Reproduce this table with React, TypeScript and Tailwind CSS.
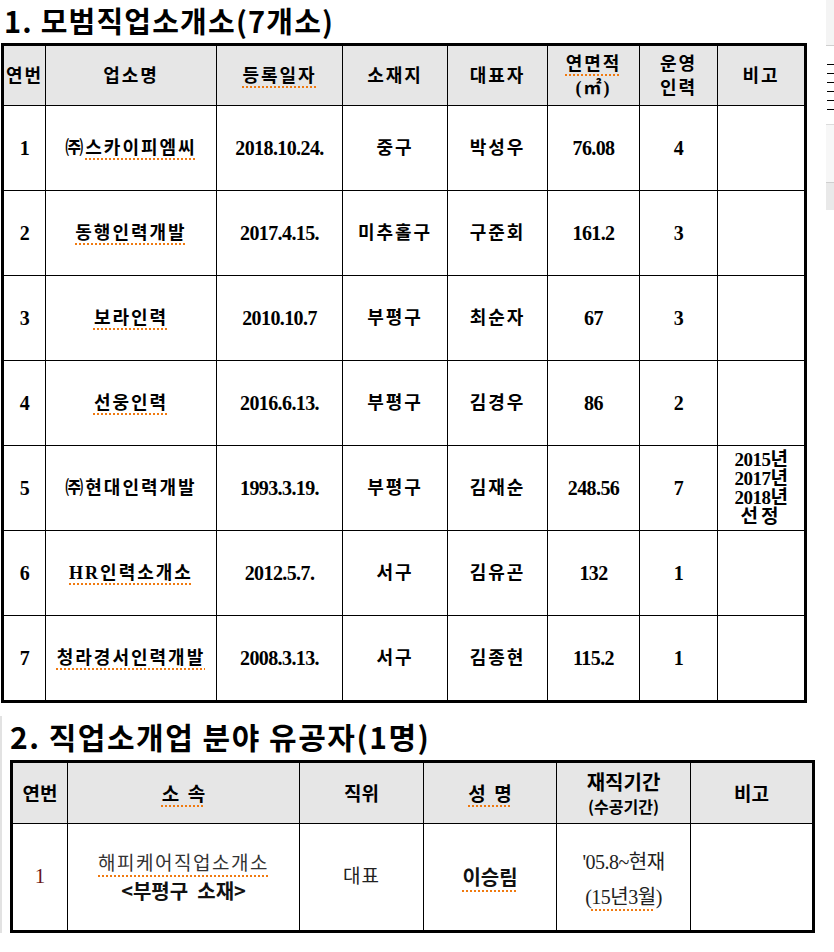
import React from "react";

const serif = "font-['Liberation_Serif','Noto_Sans_CJK_KR',serif]";
const sans = "font-['Noto_Sans_CJK_KR','Noto_Sans',sans-serif]";
const sq = "underline decoration-dotted decoration-[#f07a10] decoration-[1.5px] underline-offset-[5px]";

type Row = {
  n: string;
  name: React.ReactNode;
  date: string;
  loc: string;
  rep: string;
  area: string;
  staff: string;
  note?: React.ReactNode;
};

const rows: Row[] = [
  { n: "1", name: <><span>㈜</span><span className={sq}>스카이피엠씨</span></>, date: "2018.10.24.", loc: "중구", rep: "박성우", area: "76.08", staff: "4" },
  { n: "2", name: <span className={sq}>동행인력개발</span>, date: "2017.4.15.", loc: "미추홀구", rep: "구준회", area: "161.2", staff: "3" },
  { n: "3", name: <span className={sq}>보라인력</span>, date: "2010.10.7", loc: "부평구", rep: "최순자", area: "67", staff: "3" },
  { n: "4", name: <span className={sq}>선웅인력</span>, date: "2016.6.13.", loc: "부평구", rep: "김경우", area: "86", staff: "2" },
  {
    n: "5",
    name: <span>㈜현대인력개발</span>,
    date: "1993.3.19.",
    loc: "부평구",
    rep: "김재순",
    area: "248.56",
    staff: "7",
    note: (
      <div className="flex flex-col items-center leading-[19px] text-[19px] tracking-[-0.5px]">
        <span>2015년</span>
        <span>2017년</span>
        <span>2018년</span>
        <span className="tracking-[3px]">선정</span>
      </div>
    ),
  },
  { n: "6", name: <span className={sq}>HR인력소개소</span>, date: "2012.5.7.", loc: "서구", rep: "김유곤", area: "132", staff: "1" },
  { n: "7", name: <span className={sq}>청라경서인력개발</span>, date: "2008.3.13.", loc: "서구", rep: "김종현", area: "115.2", staff: "1" },
];

function H({ children }: { children: React.ReactNode }) {
  return (
    <div className="bg-[#e6e6e6] flex flex-col items-center justify-center text-center text-[18px] font-bold leading-[24px] tracking-[2px] text-black">
      {children}
    </div>
  );
}

function C({ children, num }: { children?: React.ReactNode; num?: boolean }) {
  return (
    <div
      className={
        num
          ? "bg-white flex items-center justify-center text-center text-[20px] font-bold tracking-[-0.6px] text-black"
          : "bg-white flex items-center justify-center text-center text-[18px] font-bold tracking-[2px] text-black"
      }
    >
      {children}
    </div>
  );
}

function H2({ children }: { children: React.ReactNode }) {
  return (
    <div className={`bg-[#e6e6e6] flex flex-col items-center justify-center text-center text-[19px] font-bold text-black ${sans}`}>
      {children}
    </div>
  );
}

export default function App() {
  return (
    <div className={`w-[834px] h-[952px] bg-white overflow-hidden flex ${serif}`}>
      <div className="w-[826px] flex flex-col">
        {/* Section 1 title */}
        <div className={`h-[43px] pl-[4px] pt-[0px] text-[29px] leading-[40px] font-bold tracking-[1.2px] text-black ${sans}`}>
          1. 모범직업소개소(7개소)
        </div>

        {/* Table 1 */}
        <div className="ml-[1px] w-fit border-[3px] border-black bg-black grid grid-cols-[41px_170px_125px_104px_99px_91px_77px_86px] grid-rows-[59px_repeat(7,84px)] gap-px">
          <H>연번</H>
          <H>업소명</H>
          <H>
            <span className={sq}>등록일자</span>
          </H>
          <H>소재지</H>
          <H>대표자</H>
          <H>
            <span className={sq}>연면적</span>
            <span>(㎡)</span>
          </H>
          <H>
            <span>운영</span>
            <span>인력</span>
          </H>
          <H>비고</H>
          {rows.map((r) => (
            <React.Fragment key={r.n}>
              <C num>{r.n}</C>
              <C>{r.name}</C>
              <C num>{r.date}</C>
              <C>{r.loc}</C>
              <C>{r.rep}</C>
              <C num>{r.area}</C>
              <C num>{r.staff}</C>
              <div className="bg-white flex items-center justify-center text-center font-bold text-black">{r.note}</div>
            </React.Fragment>
          ))}
        </div>

        {/* Section 2 */}
        <div className="mt-[13px] ml-0 border-l-[2px] border-[#e2e2e2] h-[217px] flex flex-col">
          <div className={`h-[48px] pl-[8px] text-[30px] leading-[40px] font-bold tracking-[1.5px] text-black ${sans}`}>
            2. 직업소개업 분야 유공자(1명)
          </div>
          <div className="ml-[8px] w-fit border-[3px] border-black bg-black grid grid-cols-[54px_231px_123px_132px_133px_121px] grid-rows-[60px_106px] gap-px">
            <H2>연번</H2>
            <H2>
              <span className={`${sq} whitespace-pre`}>소  속</span>
            </H2>
            <H2>직위</H2>
            <H2>
              <span className={`${sq} whitespace-pre`}>성  명</span>
            </H2>
            <H2>
              <span className="leading-[26px] text-[20px]">재직기간</span>
              <span className="text-[16px] leading-[22px]">(수공기간)</span>
            </H2>
            <H2>비고</H2>

            <div className="bg-white flex items-center justify-center text-[21px] text-[#6a1515]">1</div>
            <div className="bg-white flex flex-col items-center justify-center">
              <span className={`${sq} text-[19px] leading-[28px] text-[#333] tracking-[1.5px]`}>해피케어직업소개소</span>
              <span className={`${sans} whitespace-pre text-[20px] leading-[26px] font-bold text-[#111]`}>&lt;부평구  소재&gt;</span>
            </div>
            <div className="bg-white flex items-center justify-center text-[19px] text-[#222] tracking-[1px]">대표</div>
            <div className="bg-white flex items-center justify-center">
              <span className={`${sans} ${sq} text-[20px] font-bold text-[#111]`}>이승림</span>
            </div>
            <div className="bg-white flex flex-col items-center justify-center text-[20px] text-[#222] tracking-[-0.5px]">
              <span className="leading-[40px]">'05.8~현재</span>
              <span className="leading-[30px]">
                (<span className={sq}>15년3월</span>)
              </span>
            </div>
            <div className="bg-white" />
          </div>
        </div>
      </div>

      {/* right edge fragment of another window */}
      <div className="w-[8px] flex flex-col">
        <div className="h-[46px] bg-[#f4f4f4] border-b border-[#cfcfcf]" />
        <div className="h-[18px] bg-white" />
        <div className="flex flex-col gap-[8px] pl-[1px]">
          <div className="h-px bg-black" />
          <div className="h-px bg-black" />
          <div className="h-px bg-black" />
          <div className="h-px bg-black" />
          <div className="h-px bg-black" />
          <div className="h-px bg-black" />
        </div>
        <div className="h-[14px]" />
        <div className="h-[58px] bg-[#f7f7f7] border-t border-[#dcdcdc]" />
        <div className="h-[28px] bg-[#e9e9e9] border-t border-[#cfcfcf]" />
      </div>
    </div>
  );
}
